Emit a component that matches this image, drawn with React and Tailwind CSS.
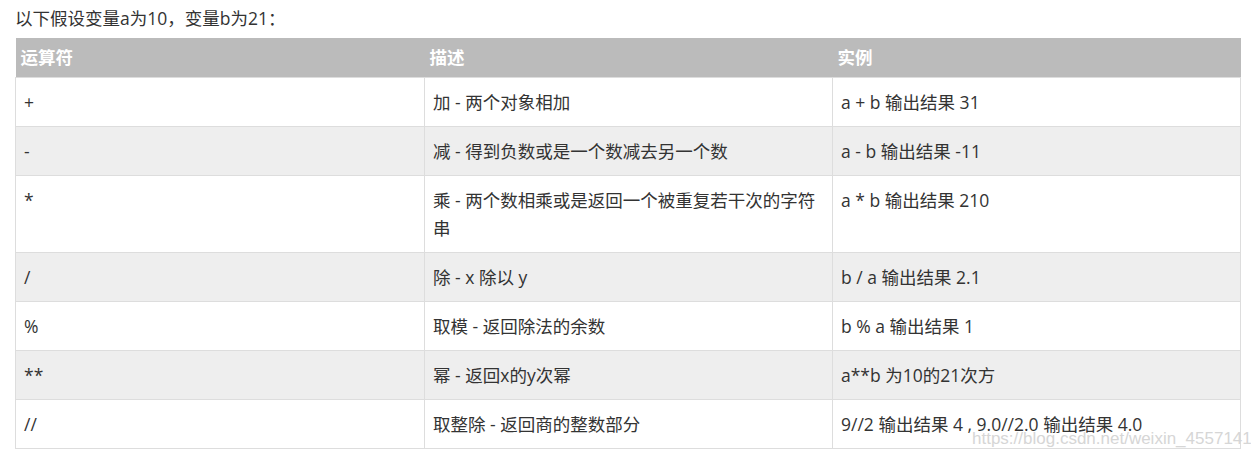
import React from 'react';

const rows = [
  ['+', '加 - 两个对象相加', 'a + b 输出结果 31'],
  ['-', '减 - 得到负数或是一个数减去另一个数', 'a - b 输出结果 -11'],
  ['*', '乘 - 两个数相乘或是返回一个被重复若干次的字符串', 'a * b 输出结果 210'],
  ['/', '除 - x 除以 y', 'b / a 输出结果 2.1'],
  ['%', '取模 - 返回除法的余数', 'b % a 输出结果 1'],
  ['**', '幂 - 返回x的y次幂', 'a**b 为10的21次方'],
  ['//', '取整除 - 返回商的整数部分', '9//2 输出结果 4 , 9.0//2.0 输出结果 4.0'],
];

const font = { fontFamily: '"Open Sans", "Noto Sans CJK SC", sans-serif' };

export default function App() {
  return (
    <div className="relative w-[1251px] h-[455px] overflow-hidden bg-white text-[#333] text-[17.5px]" style={font}>
      <p className="pl-[15px] pt-[4px] leading-[28px]">以下假设变量a为10，变量b为21：</p>

      <table className="ml-[15px] mt-[6px] w-[1225px] table-fixed border-collapse">
        <colgroup>
          <col className="w-[409px]" />
          <col className="w-[408px]" />
          <col className="w-[408px]" />
        </colgroup>
        <thead>
          <tr className="bg-[#bbbbbb] text-white">
            <th className="text-left font-bold px-[5px] py-[5px] leading-[29px]">运算符</th>
            <th className="text-left font-bold px-[5px] py-[5px] leading-[29px]">描述</th>
            <th className="text-left font-bold px-[5px] py-[5px] leading-[29px]">实例</th>
          </tr>
        </thead>
        <tbody>
          {rows.map((r, i) => (
            <tr key={i} className={i % 2 === 1 ? 'bg-[#eeeeee]' : 'bg-white'}>
              {r.map((c, j) => (
                <td key={j} className="border border-[#dddddd] align-top px-[8px] py-[10px] leading-[28px]">
                  {c}
                </td>
              ))}
            </tr>
          ))}
        </tbody>
      </table>

      <span
        className="absolute left-[972px] top-[426px] text-[17px] text-[#d6d6d6] whitespace-nowrap"
        style={{ fontFamily: '"Liberation Sans", sans-serif' }}
      >
        https://blog.csdn.net/weixin_45571411
      </span>
    </div>
  );
}
